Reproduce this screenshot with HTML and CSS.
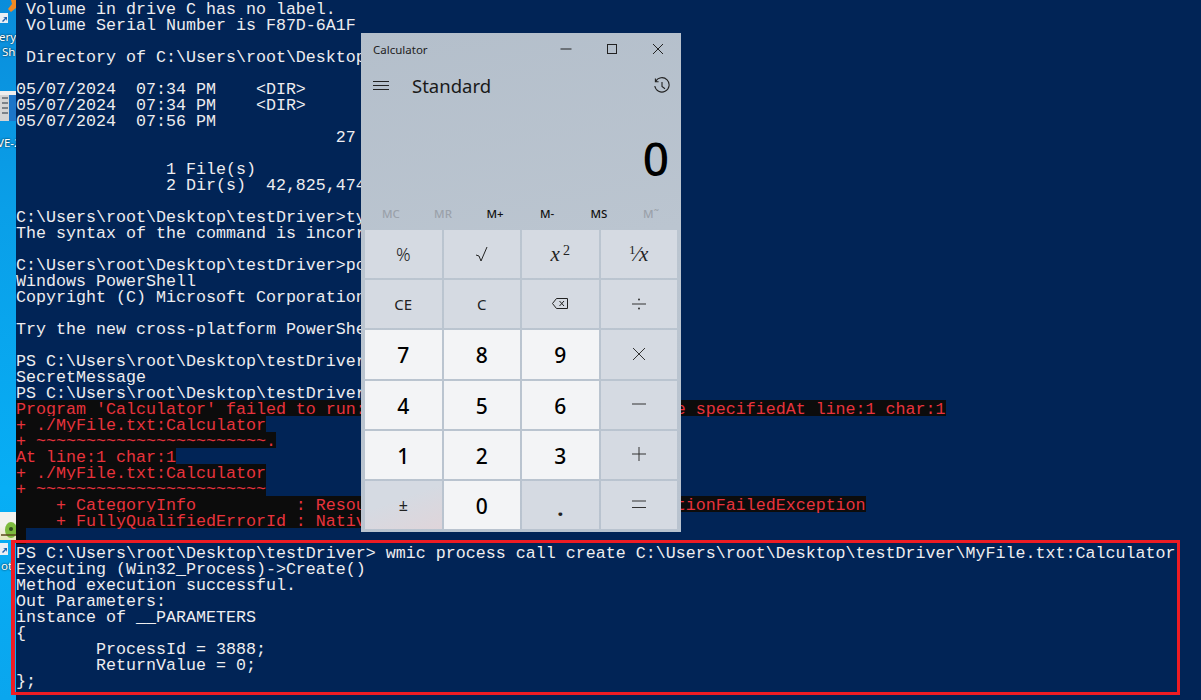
FILE: index.html
```html
<!DOCTYPE html>
<html lang="en">
<head>
<meta charset="utf-8">
<title>Calculator over PowerShell</title>
<link rel="stylesheet" href="styles.css">
</head>
<body>
<div class="screen">
  <aside class="desktop">
    <svg class="d-arrow" width="16" height="14" viewBox="0 0 16 14"><path d="M11 0h5v8l-5 4-3-3 4-5z" fill="#f08a24"/></svg>
    <span class="d-tile d-tile-a"><svg width="8" height="10" viewBox="0 0 8 10"><rect width="8" height="10" fill="#e8eef4"/><path d="M2 8l3-3-2-1h4v4L6 6 3 9z" fill="#1e62b0"/></svg></span>
    <span class="d-label d-l1">eryt</span>
    <span class="d-label d-l2">Sh</span>
    <span class="d-win"><i></i><i></i><i></i><i></i></span>
    <span class="d-label d-l3">VE-2</span>
    <span class="d-paper"></span>
    <svg class="d-frog" width="16" height="18" viewBox="0 0 16 18"><ellipse cx="11" cy="8" rx="6" ry="8" fill="#7dbb3f"/><circle cx="11" cy="7" r="2" fill="#2f4a1c"/><path d="M1 13h15" stroke="#5a4a1c" stroke-width="1.5"/></svg>
    <span class="d-tile d-tile-b"><svg width="8" height="12" viewBox="0 0 8 12"><rect width="8" height="12" fill="#e8eef4"/><path d="M2 9l3-3-2-1h4v4L6 7 3 10z" fill="#1e62b0"/></svg></span>
    <span class="d-label d-l4">ot</span>
  </aside>

  <main class="console">
<div class="line"> Volume in drive C has no label.</div>
<div class="line"> Volume Serial Number is F87D-6A1F</div>
<div class="line"></div>
<div class="line"> Directory of C:\Users\root\Desktop</div>
<div class="line"></div>
<div class="line">05/07/2024  07:34 PM    &lt;DIR&gt;</div>
<div class="line">05/07/2024  07:34 PM    &lt;DIR&gt;</div>
<div class="line">05/07/2024  07:56 PM</div>
<div class="line">                                27</div>
<div class="line"></div>
<div class="line">               1 File(s)</div>
<div class="line">               2 Dir(s)  42,825,474</div>
<div class="line"></div>
<div class="line">C:\Users\root\Desktop\testDriver&gt;ty</div>
<div class="line">The syntax of the command is incorr</div>
<div class="line"></div>
<div class="line">C:\Users\root\Desktop\testDriver&gt;po</div>
<div class="line">Windows PowerShell</div>
<div class="line">Copyright (C) Microsoft Corporation</div>
<div class="line"></div>
<div class="line">Try the new cross-platform PowerShe</div>
<div class="line"></div>
<div class="line">PS C:\Users\root\Desktop\testDriver</div>
<div class="line">SecretMessage</div>
<div class="line">PS C:\Users\root\Desktop\testDriver</div>
<div class="line"><span class="err">Program 'Calculator' failed to run:                               e specifiedAt line:1 char:1</span></div>
<div class="line"><span class="err">+ ./MyFile.txt:Calculator</span></div>
<div class="line"><span class="err">+ ~~~~~~~~~~~~~~~~~~~~~~~.</span></div>
<div class="line"><span class="err">At line:1 char:1</span></div>
<div class="line"><span class="err">+ ./MyFile.txt:Calculator</span></div>
<div class="line"><span class="err">+ ~~~~~~~~~~~~~~~~~~~~~~~</span></div>
<div class="line"><span class="err">    + CategoryInfo          : Resou                               tionFailedException</span></div>
<div class="line"><span class="err">    + FullyQualifiedErrorId : Nativ</span></div>
<div class="line"><span class="err"> </span></div>
<div class="line">PS C:\Users\root\Desktop\testDriver&gt; wmic process call create C:\Users\root\Desktop\testDriver\MyFile.txt:Calculator</div>
<div class="line">Executing (Win32_Process)-&gt;Create()</div>
<div class="line">Method execution successful.</div>
<div class="line">Out Parameters:</div>
<div class="line">instance of __PARAMETERS</div>
<div class="line">{</div>
<div class="line">        ProcessId = 3888;</div>
<div class="line">        ReturnValue = 0;</div>
<div class="line">};</div>
  </main>

  <section class="calc">
    <header class="calc-title">
      <span class="calc-name">Calculator</span>
      <div class="calc-controls">
        <svg width="46" height="32" viewBox="0 0 46 32"><path d="M17.500 16h11" stroke="#222" fill="none"/></svg>
        <svg width="46" height="32" viewBox="0 0 46 32"><rect x="18.500" y="11.500" width="9" height="9" stroke="#222" fill="none"/></svg>
        <svg width="46" height="32" viewBox="0 0 46 32"><path d="M18 11l10 10M28 11L18 21" stroke="#222" fill="none"/></svg>
      </div>
    </header>
    <div class="calc-nav">
      <svg class="nav-menu" width="16" height="10" viewBox="0 0 16 10"><path d="M0 .5h16M0 4.500h16M0 8.500h16" stroke="#222" fill="none"/></svg>
      <span class="calc-mode">Standard</span>
      <svg class="nav-history" width="18" height="18" viewBox="0 0 18 18"><path d="M2.600 4.400A7.200 7.200 0 1 1 1.800 9M2.400 1.500v3.200h3.200M9 5v4.500l3 2.200" stroke="#222" stroke-width="1.100" fill="none"/></svg>
    </div>
    <div class="calc-display">0</div>
    <div class="calc-memory">
      <span class="off">MC</span><span class="off">MR</span><span>M+</span><span>M-</span><span>MS</span><span class="off">M˜</span>
    </div>
    <div class="keypad">
      <button class="key fn pct">%</button>
      <button class="key fn"><svg width="14" height="16" viewBox="0 0 14 16"><path d="M1 9l3 1 2 5L12 1" stroke="#222" fill="none"/></svg></button>
      <button class="key fn math"><i>x</i><sup>2</sup></button>
      <button class="key fn math"><small>1</small>⁄<i>x</i></button>
      <button class="key fn">CE</button>
      <button class="key fn">C</button>
      <button class="key fn"><svg width="16" height="11" viewBox="0 0 16 11"><path d="M4.500.5h11v10h-11L.5 5.500zM7.500 3l4.500 5M12 3L7.500 8" stroke="#222" fill="none"/></svg></button>
      <button class="key fn"><svg width="16" height="12" viewBox="0 0 16 12"><path d="M1 6h14" stroke="#333" fill="none"/><circle cx="8" cy="1.500" r="1" fill="#333"/><circle cx="8" cy="10.500" r="1" fill="#333"/></svg></button>
      <button class="key num">7</button>
      <button class="key num">8</button>
      <button class="key num">9</button>
      <button class="key fn"><svg width="14" height="14" viewBox="0 0 14 14"><path d="M1 1l12 12M13 1L1 13" stroke="#333" fill="none"/></svg></button>
      <button class="key num">4</button>
      <button class="key num">5</button>
      <button class="key num">6</button>
      <button class="key fn"><svg width="16" height="2" viewBox="0 0 16 2"><path d="M1 1h14" stroke="#333" fill="none"/></svg></button>
      <button class="key num">1</button>
      <button class="key num">2</button>
      <button class="key num">3</button>
      <button class="key fn"><svg width="14" height="14" viewBox="0 0 14 14"><path d="M0 7h14M7 0v14" stroke="#333" fill="none"/></svg></button>
      <button class="key fn sign">±</button>
      <button class="key num">0</button>
      <button class="key fn dot">.</button>
      <button class="key fn"><svg width="16" height="9" viewBox="0 0 16 9"><path d="M1 1h14M1 7.500h14" stroke="#333" fill="none"/></svg></button>
    </div>
  </section>

  <div class="highlight"></div>
</div>
</body>
</html>
```
FILE: styles.css
```css
* { box-sizing: border-box; }
html, body { margin: 0; height: 100%; overflow: hidden; background: #012456; }

.screen { position: relative; display: flex; width: 1201px; height: 700px; overflow: hidden; }

/* Desktop sliver on the left */
.desktop {
  position: relative;
  flex: 0 0 16px;
  overflow: hidden;
  background: linear-gradient(180deg, #0a8ddb 0%, #0a9fe8 30%, #07aef5 70%, #0aa6ee 100%);
}
.d-arrow { position: absolute; left: 0; top: 0; }
.d-tile { position: absolute; left: 0; width: 8px; display: flex; }
.d-tile-a { top: 13px; }
.d-tile-b { top: 543px; }
.d-label {
  position: absolute;
  color: #fff;
  font: 11.500px/14px "Noto Sans", sans-serif;
  white-space: nowrap;
  text-shadow: 0 0 2px #000;
}
.d-l1 { left: -1px; top: 30px; }
.d-l2 { left: 2px; top: 45px; }
.d-l3 { left: -3px; top: 136px; }
.d-l4 { left: 1px; top: 559px; }
.d-win {
  position: absolute; left: 0; top: 91px; width: 16px; height: 30px;
  padding: 6px 8px 0 2px;
  display: flex; flex-direction: column; gap: 3px;
  background:
    linear-gradient(180deg, #eeeeee 0 4px, transparent 4px),
    linear-gradient(90deg, #d4d4d4 0 9px, #1c75c8 9px);
}
.d-win i { display: block; height: 2px; background: #7c8288; }
.d-paper { position: absolute; left: 0; top: 512px; width: 16px; height: 28px; background: linear-gradient(180deg, #f2f2ee 0 50%, #e6e8b8 100%); }
.d-frog { position: absolute; left: 0; top: 522px; }

/* Console */
.console {
  flex: 1;
  min-width: 0;
  color: #eeedf0;
  font-family: "Liberation Mono", monospace;
  font-size: 16.670px;
  line-height: 20px;
}
.line { height: 16px; white-space: pre; }
.err { display: inline-block; height: 16px; background: #0c0c0c; color: #e8333c; }

/* Calculator window */
.calc {
  position: absolute;
  left: 361px;
  top: 33px;
  width: 320px;
  height: 499px;
  display: flex;
  flex-direction: column;
  padding: 0 4px 3px;
  background: linear-gradient(170deg, #b4bfcb 0%, #bbc5d0 45%, #b9c3cf 100%);
  font-family: "Noto Sans", sans-serif;
  color: #111;
}
.calc-title { display: flex; align-items: center; justify-content: space-between; height: 32px; flex: none; }
.calc-name { padding-left: 8px; font-size: 11.500px; color: #222; }
.calc-controls { display: flex; margin-right: -4px; }
.calc-controls svg { display: block; }
.calc-nav { display: flex; align-items: center; height: 42px; flex: none; padding: 0 6px 0 8px; }
.nav-menu { flex: none; }
.calc-mode { margin-left: 23px; margin-bottom: 2px; font-size: 18.500px; color: #1a1a1a; }
.nav-history { margin-left: auto; }
.calc-display {
  flex: 1;
  min-height: 0;
  display: flex;
  align-items: flex-end;
  justify-content: flex-end;
  padding: 0 8px 19px 0;
  font-size: 46px;
  font-weight: 500;
  line-height: 1;
  color: #000;
}
.calc-memory {
  flex: none;
  height: 30px;
  padding-bottom: 4px;
  display: grid;
  grid-template-columns: repeat(6, 1fr);
  align-items: center;
  justify-items: center;
  font-size: 11.500px;
  font-weight: 500;
  color: #111;
}
.calc-memory .off { color: #9aa1aa; }

.keypad {
  flex: none;
  height: 299px;
  display: grid;
  grid-template-columns: repeat(4, 1fr);
  grid-template-rows: repeat(6, 1fr);
  gap: 2px;
}
.key {
  display: flex;
  align-items: center;
  justify-content: center;
  padding: 0;
  border: 0;
  font-family: inherit;
  color: #222;
}
.key svg { display: block; margin-bottom: 1px; }
.fn { background: #d5dae2; font-size: 15px; }
.num { background: #f3f4f6; padding-top: 2px; font-size: 21px; font-weight: 500; color: #000; }
.pct { font-size: 18px; font-weight: 300; }
.math { font-family: "Liberation Serif", serif; font-size: 21px; }
.math sup { font-size: 14px; line-height: 1; margin-left: 3px; position: relative; top: -3px; vertical-align: baseline; }
.math small { font-size: 13px; position: relative; top: -4px; }
.sign { background: linear-gradient(160deg, #d5dae2 40%, #dfd5da 100%); font-size: 16px; }
.dot { font-size: 22px; font-weight: 700; align-items: flex-end; padding-bottom: 7px; }

/* Annotation rectangle drawn over the screenshot */
.highlight {
  position: absolute;
  left: 11px;
  top: 540px;
  width: 1169px;
  height: 155px;
  border: 3px solid #ed1c24;
  border-left-width: 4px;
  pointer-events: none;
}
```
